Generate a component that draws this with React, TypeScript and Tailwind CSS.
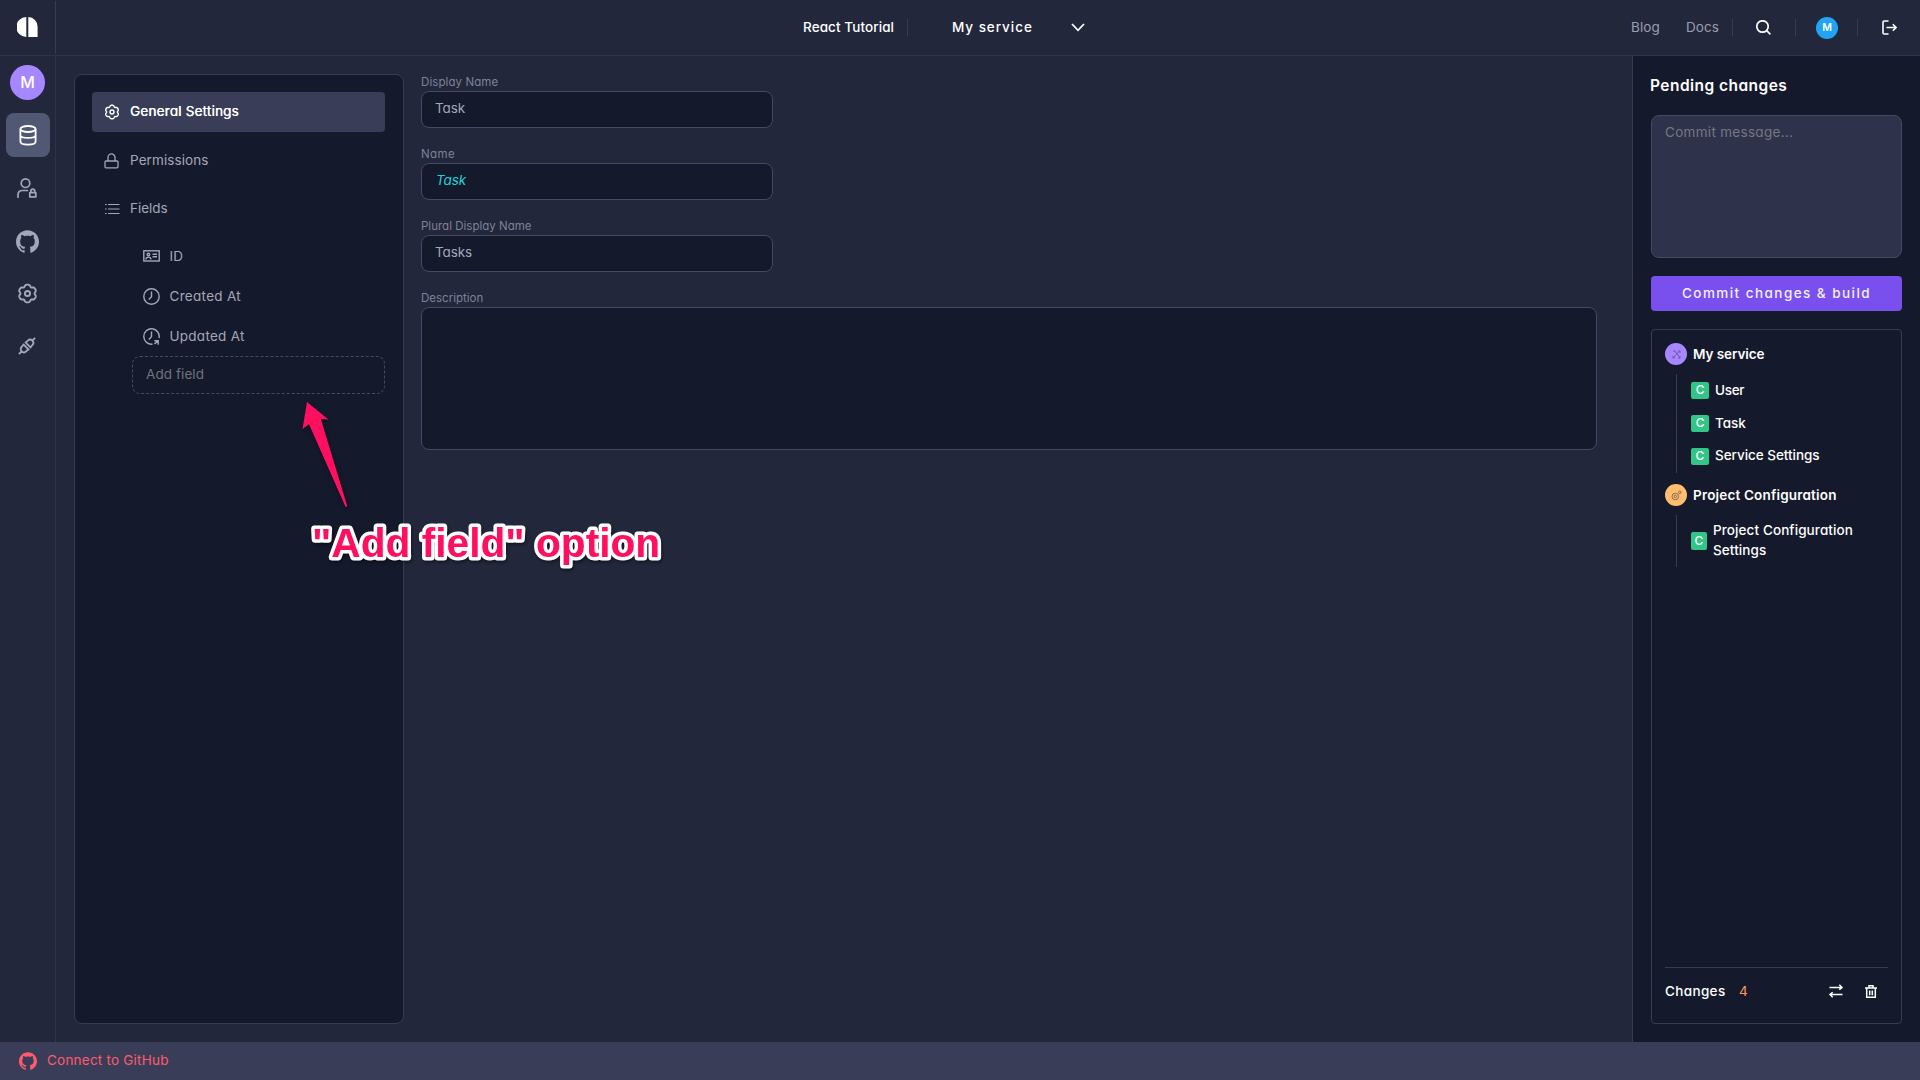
import type { ReactNode } from 'react';
import { SiGithub } from 'react-icons/si';

/** Six-lobed cog outline around the centre of a 22-unit box. */
const cogPath =
  Array.from({ length: 120 }, (_, i) => {
    const t = (i / 120) * Math.PI * 2;
    const r = 8.6 + 0.95 * Math.cos(6 * t) - 0.25 * Math.cos(12 * t);
    return `${i ? 'L' : 'M'}${(11 + r * Math.sin(t)).toFixed(2)} ${(11 - r * Math.cos(t)).toFixed(2)}`;
  }).join('') + 'Z';

function Cog({ className }: { className: string }) {
  return (
    <svg viewBox="0 0 22 22" className={className} fill="none" stroke="currentColor" strokeWidth="2">
      <path d={cogPath} />
      <circle cx="11" cy="11" r="2.7" />
    </svg>
  );
}

function Logo() {
  return (
    <svg viewBox="0 0 21 20" className="h-5 w-[21px]" fill="#fff">
      <path d="M9.3 0v20A10 10 0 0 1 9.3 0Z" />
      <path d="M11.3 0A9.6 9.6 0 0 1 20.6 9.8V20h-9.3Z" />
    </svg>
  );
}

function DatabaseIcon() {
  return (
    <svg viewBox="0 0 18 21" className="h-[21px] w-[18px]" fill="none" stroke="currentColor" strokeWidth="1.8">
      <ellipse cx="9" cy="4" rx="7.6" ry="3" />
      <path d="M1.4 4v12.5c0 1.9 3.2 3.1 7.6 3.1s7.6-1.2 7.6-3.1V4M1.4 10.2c0 1.7 3.2 2.7 7.6 2.7s7.6-1 7.6-2.7" />
    </svg>
  );
}

function UserLockIcon() {
  return (
    <svg viewBox="0 0 20 20" className="size-5" fill="none" stroke="currentColor" strokeWidth="1.7">
      <circle cx="8.5" cy="5.2" r="4.3" />
      <path d="M1 19.3v-2.8a4 4 0 0 1 4-4h5.5" strokeLinecap="round" />
      <path d="M12.8 14.7h6v4.2h-6zM13.9 14.5v-1.4a1.9 1.9 0 0 1 3.8 0v1.4" strokeLinejoin="round" />
    </svg>
  );
}

function PlugIcon() {
  return (
    <svg viewBox="0 0 20 20" className="size-5" fill="none" stroke="currentColor" strokeWidth="1.8">
      <g transform="rotate(-45 10 10)">
        <path d="M-1.5 10H2M18 10h3.5M9.3 6.8H5.6a3.2 3.2 0 0 0 0 6.4h3.7M10.7 6.8h3.7a3.2 3.2 0 0 1 0 6.4h-3.7M8.7 5.6v8.8M11.5 5.6v8.8" />
      </g>
    </svg>
  );
}

function LockIcon() {
  return (
    <svg viewBox="0 0 15 16" className="h-4 w-[15px]" fill="none" stroke="currentColor" strokeWidth="1.3">
      <rect x="1" y="8" width="13" height="6.8" rx="1" />
      <path d="M4 8V4.4a3.5 3.5 0 0 1 7 0V8" />
    </svg>
  );
}

function ListIcon() {
  return (
    <svg viewBox="0 0 15 12" className="h-3 w-[15px]" fill="none" stroke="currentColor" strokeWidth="1.2">
      <path d="M0 1.5h1.6M3 1.5h11.5M0 6h1.6M3 6h11.5M0 10.5h1.6M3 10.5h11.5" />
    </svg>
  );
}

function IdCardIcon() {
  return (
    <svg viewBox="0 0 17 12" className="h-3 w-[17px]" fill="none" stroke="currentColor" strokeWidth="1.4">
      <rect x=".8" y=".8" width="15.4" height="10.2" />
      <circle cx="5.4" cy="4.5" r="1.3" />
      <path d="M2.9 9.6c0-1.7 1-2.5 2.5-2.5s2.5.8 2.5 2.5M9.5 4.3h4.5M9.5 6.8h4.5" />
    </svg>
  );
}

function ClockIcon() {
  return (
    <svg viewBox="0 0 17 17" className="size-[17px]" fill="none" stroke="currentColor" strokeWidth="1.4">
      <circle cx="8.5" cy="8.5" r="7.7" />
      <path d="M8.5 3.4v5.4L5.8 11.5" />
    </svg>
  );
}

function ClockUpdateIcon() {
  return (
    <svg viewBox="0 0 17 17" className="size-[17px]" fill="none" stroke="currentColor" strokeWidth="1.4">
      <path d="M16 10.2A7.7 7.7 0 1 0 9.6 16.1M8.5 3.4v5.4L5.8 11.5M11.3 12.7h3.9v4M15.2 12.7l-3.7 3.2" />
    </svg>
  );
}

function Sep({ className = '' }: { className?: string }) {
  return <span className={`h-[17px] w-px bg-[#373c56] ${className}`} />;
}

function TopBar() {
  return (
    <header className="flex h-14 shrink-0 items-center border-b border-[#2e334a]">
      <div className="flex h-[53px] w-14 shrink-0 items-center border-r border-[#373c56] pb-px pl-[17px]">
        <Logo />
      </div>
      <div className="ml-[747px] flex w-[300px] items-center font-medium text-white">
        <span className="w-[104px] tracking-[0.08px]">React Tutorial</span>
        <Sep />
        <span className="ml-11 w-[119px] tracking-[0.95px]">My service</span>
        <svg viewBox="0 0 14 9" className="h-[9px] w-3.5" fill="none" stroke="currentColor" strokeWidth="1.8">
          <path d="m1 1 6 6.3L13 1" />
        </svg>
      </div>
      <nav className="ml-auto flex items-center text-[#9a9fb0]">
        <a className="w-[55px] tracking-[0.13px]">Blog</a>
        <a className="w-[46px] tracking-[0.08px]">Docs</a>
        <Sep />
        <svg viewBox="0 0 15 15" className="mr-px ml-[23px] size-[15px] text-white" fill="none" stroke="currentColor" strokeWidth="1.7">
          <circle cx="6.5" cy="6.5" r="5.7" />
          <path d="m10.7 10.7 3.7 3.7" />
        </svg>
        <Sep className="ml-[23px]" />
        <span className="ml-5 flex size-[22px] items-center justify-center rounded-full bg-[#20a4f3] text-[10.5px] font-semibold text-white">
          M
        </span>
        <Sep className="ml-[19px]" />
        <svg viewBox="0 0 15 15" className="mr-[23px] ml-6 size-[15px] text-white" fill="none" stroke="currentColor" strokeWidth="1.6">
          <path d="M6.5 1H2.3A1.3 1.3 0 0 0 1 2.3v10.4A1.3 1.3 0 0 0 2.3 14h4.2M4.5 7.5h9.3M10.8 4.2l3.3 3.3-3.3 3.3" />
        </svg>
      </nav>
    </header>
  );
}

function SideRail() {
  return (
    <aside className="flex w-14 shrink-0 flex-col items-center border-r border-[#2e334a] pt-[9px] text-[#a3a8b8]">
      <span className="flex size-[35px] items-center justify-center rounded-full bg-[#a787ff] pb-px text-[16px] font-medium text-white">M</span>
      <span className="mt-[13px] flex size-11 items-center justify-center rounded-lg bg-[#515873] text-white">
        <DatabaseIcon />
      </span>
      <span className="mt-[9px] flex size-11 items-center justify-center pr-px">
        <UserLockIcon />
      </span>
      <span className="mt-[9px] flex size-11 items-center justify-center">
        <SiGithub className="size-[23px]" />
      </span>
      <span className="mt-2 flex size-11 items-center justify-center">
        <Cog className="size-[21px]" />
      </span>
      <span className="mt-[9px] flex size-11 items-center justify-center pr-px">
        <PlugIcon />
      </span>
    </aside>
  );
}

function FieldLink({ icon, children }: { icon: ReactNode; children: ReactNode }) {
  return (
    <a className="flex h-10 items-center gap-[9.5px] pl-[51px]">
      {icon}
      {children}
    </a>
  );
}

function EntityNav() {
  return (
    <nav className="flex w-[330px] shrink-0 flex-col rounded-lg border border-[#373c56] bg-[#15192c] py-[17px] pr-[18px] pl-[17px] text-[#a3a8b8]">
      <a className="flex h-10 items-center gap-[10px] rounded bg-[#393d57] pb-px pl-3 text-white">
        <Cog className="size-4" />
        <span className="tracking-[0.2px] [text-shadow:0.3px_0_0_currentColor]">General Settings</span>
      </a>
      <a className="mt-2 flex h-10 items-center gap-[11px] pt-px pl-3">
        <LockIcon />
        <span className="tracking-[0.09px]">Permissions</span>
      </a>
      <a className="mt-2 flex h-10 items-center gap-[10px] pt-px pl-[13px]">
        <ListIcon />
        <span className="tracking-[-0.05px]">Fields</span>
      </a>
      <div className="mt-2 flex flex-col">
        <FieldLink icon={<IdCardIcon />}>ID</FieldLink>
        <FieldLink icon={<ClockIcon />}>
          <span className="tracking-[0.3px]">Created At</span>
        </FieldLink>
        <FieldLink icon={<ClockUpdateIcon />}>
          <span className="tracking-[0.26px]">Updated At</span>
        </FieldLink>
      </div>
      <input
        placeholder="Add field"
        className="ml-10 h-[38px] rounded-lg border border-dashed border-[#444a66] bg-transparent px-[13px] pb-[3px] tracking-[0.08px] outline-none placeholder:text-[#70737c]"
      />
    </nav>
  );
}

function TextField({ label, value, labelClass, valueClass }: { label: string; value: string; labelClass: string; valueClass: string }) {
  return (
    <label className="flex w-[352px] flex-col pb-[17px]">
      <span className={`h-[18px] text-[11.5px] leading-[19px] text-[#7d829a] ${labelClass}`}>{label}</span>
      <input
        defaultValue={value}
        className={`h-[37px] rounded-lg border border-[#444a66] bg-[#15192c] px-[13px] pb-[4px] outline-none ${valueClass}`}
      />
    </label>
  );
}

function EntityForm() {
  return (
    <form className="-mt-px ml-[17px] flex w-[1176px] flex-col">
      <TextField label="Display Name" value="Task" labelClass="tracking-[0.09px]" valueClass="text-[#a3a8b8] tracking-[-0.08px]" />
      <TextField label="Name" value="Task" labelClass="tracking-[0.4px]" valueClass="text-[#20d5d9] italic tracking-[-0.08px] indent-px" />
      <TextField label="Plural Display Name" value="Tasks" labelClass="tracking-[0.01px]" valueClass="text-[#a3a8b8] tracking-[-0.09px]" />
      <label className="flex flex-col">
        <span className="h-[18px] text-[11.5px] leading-[19px] text-[#7d829a]">Description</span>
        <textarea className="h-[143px] resize-none rounded-lg border border-[#444a66] bg-[#15192c] outline-none" />
      </label>
    </form>
  );
}

function Created({ className }: { className: string }) {
  return (
    <span className={`flex shrink-0 items-center justify-center rounded-[2px] bg-[#31c587] pb-px text-[12px] font-medium text-white ${className}`}>
      C
    </span>
  );
}

function PendingChanges() {
  return (
    <aside className="flex w-72 shrink-0 flex-col border-l border-[#373c56] bg-[#15192c] pt-[19px] pr-[18px] pb-[18px] pl-[18px] text-white">
      <h2 className="-ml-px h-[22px] text-[15.5px] leading-[22px] font-semibold tracking-[0.46px]">Pending changes</h2>
      <textarea
        placeholder="Commit message..."
        className="mt-[18px] h-[143px] shrink-0 resize-none rounded-lg border border-[#444a66] bg-[#2e324b] px-[13px] pt-[6px] leading-5 tracking-[0.3px] outline-none placeholder:text-[#77777f]"
      />
      <button className="mt-[18px] h-[35px] shrink-0 rounded bg-[#7950ed] font-medium tracking-[1.45px] text-[#f3efff]">
        Commit changes &amp; build
      </button>
      <section className="mt-[18px] flex flex-1 flex-col rounded border border-[#373c56] px-[13px]">
        <div className="mt-[13px] flex h-[22px] items-center gap-[6px] font-semibold tracking-[-0.07px]">
          <span className="flex size-[22px] items-center justify-center rounded-full bg-[#a787ff] text-[#6d55b0]">
            <svg viewBox="0 0 9 9" className="size-[9px]" fill="none" stroke="currentColor" strokeWidth="1">
              <path d="M1 1h2L7.8 7.5M1 7.8 7 1.5M5.8 1H8v2M1 6v2h2M6 8h2V6" />
            </svg>
          </span>
          My service
        </div>
        <div className="mt-[9px] ml-[11px] flex h-[99px] flex-col border-l border-[#373c56] pl-[14px] font-medium">
          <div className="flex h-[33px] items-center gap-[6px] tracking-[-0.3px]">
            <Created className="h-[17px] w-[18px]" />
            User
          </div>
          <div className="flex h-[33px] items-center gap-[6px] tracking-[-0.08px]">
            <Created className="h-[17px] w-[18px]" />
            Task
          </div>
          <div className="flex h-[33px] items-center gap-[6px] tracking-[-0.04px]">
            <Created className="h-[17px] w-[18px]" />
            <span className="pb-[2px]">Service Settings</span>
          </div>
        </div>
        <div className="mt-[11px] flex h-[22px] items-center gap-[6px] font-semibold tracking-[0.18px]">
          <span className="flex size-[22px] items-center justify-center rounded-full bg-[#ffbd70] text-[#8a6a4c]">
            <svg viewBox="0 0 11 11" className="size-[11px]" fill="none" stroke="currentColor" strokeWidth="1">
              <circle cx="4.3" cy="6.5" r="3.3" />
              <circle cx="4.3" cy="6.5" r="1.2" />
              <circle cx="8.8" cy="2.3" r="1.3" />
            </svg>
          </span>
          Project Configuration
        </div>
        <div className="mt-[9px] ml-[11px] flex h-[52px] items-center gap-[6px] border-l border-[#373c56] pl-[14px] leading-5 font-medium tracking-[0.1px]">
          <Created className="h-[18px] w-4" />
          <span className="w-[150px] pb-[2px]">Project Configuration Settings</span>
        </div>
        <footer className="mt-auto flex h-14 items-start border-t border-[#373c56] pt-[13px]">
          <span className="w-[74px] leading-5 font-medium tracking-[0.35px]">Changes</span>
          <span className="leading-5 text-[#ff9a5c]">4</span>
          <svg viewBox="0 0 14 14" className="mt-[3px] ml-auto size-3.5" fill="none" stroke="currentColor" strokeWidth="1.5">
            <path d="M.5 3.5h12.3M10.3.8 13 3.5l-2.7 2.2M13.5 10.5H1.2M3.7 8.2 1 10.5l2.7 2.7" />
          </svg>
          <svg viewBox="0 0 12 14" className="mt-1 mr-[11px] ml-[22px] h-3.5 w-3" fill="none" stroke="currentColor" strokeWidth="1.5">
            <path d="M0 3h12M1.7 3v9.2h8.6V3M4 2.5V.8h4v1.7M4.7 5.5v4.7M7.3 5.5v4.7" />
          </svg>
        </footer>
      </section>
    </aside>
  );
}

function Callout() {
  return (
    <svg viewBox="0 0 380 190" className="pointer-events-none absolute top-[395px] left-[295px] h-[190px] w-[380px]">
      <path
        d="M12 7 33.7 24.7 25.8 23.7 52.3 111.2 50.6 112 14 29.2 7.5 34Z"
        fill="#ff0f5f"
        className="drop-shadow-[1px_2px_2px_rgba(0,0,0,0.5)]"
      />
      <text
        x="17"
        y="162"
        fill="#ff0f5f"
        stroke="#fff"
        strokeWidth="7"
        strokeLinejoin="round"
        className="font-['Liberation_Sans',sans-serif] text-[40.7px] font-bold drop-shadow-[1px_2px_1.5px_rgba(0,0,0,0.45)] [paint-order:stroke]"
      >
        "Add field" option
      </text>
    </svg>
  );
}

export default function App() {
  return (
    <div className="relative flex h-[1080px] w-[1920px] flex-col overflow-hidden bg-[#22273c] font-['Inter',sans-serif] text-[13.5px] [font-feature-settings:'cv11']">
      <TopBar />
      <div className="flex min-h-0 flex-1">
        <SideRail />
        <main className="flex flex-1 py-[18px] pl-[18px]">
          <EntityNav />
          <EntityForm />
        </main>
        <PendingChanges />
      </div>
      <footer className="flex h-[38px] shrink-0 items-center gap-[10px] bg-[#393d57] pb-px pl-[19px] tracking-[0.22px] text-[#ff5b6e]">
        <SiGithub className="size-[18px]" />
        Connect to GitHub
      </footer>
      <Callout />
    </div>
  );
}
